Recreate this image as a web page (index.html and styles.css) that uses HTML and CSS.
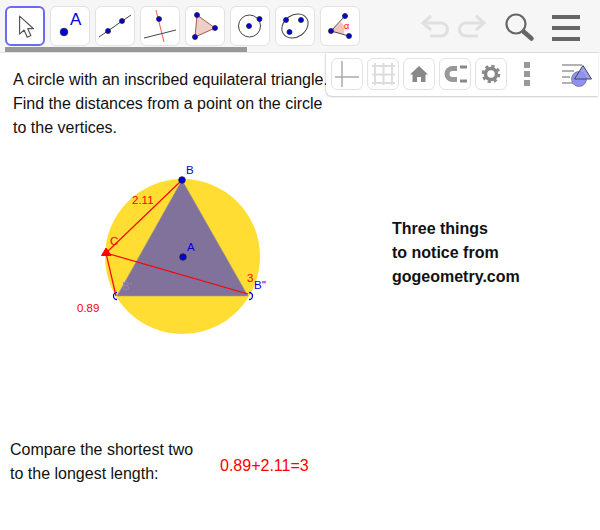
FILE: index.html
```html
<!DOCTYPE html>
<html lang="en">
<head>
<meta charset="utf-8">
<title>Three things to notice</title>
<link rel="stylesheet" href="styles.css">
</head>
<body>
<div class="app">
  <header class="toolbar">
    <div class="tools">
      <button class="tool active"><svg viewBox="0 0 40 40"><path d="M14 9V29l5-4.500 3.500 8 4-2-3.500-7.500h6.500z" fill="#fff" stroke="#555" stroke-width="1.300" stroke-linejoin="round"/></svg></button>
      <button class="tool"><svg viewBox="0 0 38 38"><circle cx="13" cy="25" r="3.800" fill="#0000e0" stroke="#223" stroke-width=".8"/><text x="19" y="18" class="icon-a">A</text></svg></button>
      <button class="tool"><svg viewBox="0 0 38 38"><path d="M3 30L35 8" class="ln"/><circle cx="12" cy="24" r="2.500" class="pt"/><circle cx="26" cy="14" r="2.500" class="pt"/></svg></button>
      <button class="tool"><svg viewBox="0 0 38 38"><path d="M15 3l8 32" class="ln red"/><path d="M3 31l32-8" class="ln"/><circle cx="18" cy="12" r="2.500" class="pt"/></svg></button>
      <button class="tool"><svg viewBox="0 0 38 38"><path d="M11 8L29 21 9 30z" fill="#eecfc8" stroke="#a8584c" stroke-width="1"/><circle cx="11" cy="8" r="2.500" class="pt"/><circle cx="29" cy="21" r="2.500" class="pt"/><circle cx="9" cy="30" r="2.500" class="pt"/></svg></button>
      <button class="tool"><svg viewBox="0 0 38 38"><circle cx="18.500" cy="19" r="11" class="ln"/><circle cx="18" cy="19" r="2.500" class="pt"/><circle cx="28.500" cy="12" r="2.500" class="pt"/></svg></button>
      <button class="tool"><svg viewBox="0 0 38 38"><ellipse cx="19" cy="19" rx="14" ry="11" transform="rotate(-35 19 19)" class="ln"/><circle cx="10" cy="13" r="2.500" class="pt"/><circle cx="25" cy="13" r="2.500" class="pt"/><circle cx="13.500" cy="25" r="2.500" class="pt"/></svg></button>
      <button class="tool"><svg viewBox="0 0 38 38"><path d="M10 24L20 15a10 10 0 0 1 2.500 12z" fill="#f4c4bc"/><path d="M24 9L10 24l18 5" class="ln"/><circle cx="24" cy="9" r="2.500" class="pt"/><circle cx="10" cy="24" r="2.500" class="pt"/><circle cx="28" cy="29" r="2.500" class="pt"/><text x="23" y="22" class="icon-alpha">α</text></svg></button>
    </div>
    <div class="actions">
      <svg class="act undo" viewBox="0 0 30 24"><path d="M3 9h18a6.500 6.500 0 0 1 0 13H10" class="undo-l"/><path d="M11 2L3 9l8 7" class="undo-l"/></svg>
      <svg class="act redo" viewBox="0 0 30 24"><path d="M27 9H9a6.500 6.500 0 0 0 0 13h12" class="undo-l"/><path d="M19 2l8 7-8 7" class="undo-l"/></svg>
      <svg class="act search" viewBox="0 0 30 30"><circle cx="11" cy="11" r="9.500" fill="none" stroke="#666" stroke-width="2.200"/><path d="M18.500 18.500L26.500 25.500" stroke="#666" stroke-width="4.500" stroke-linecap="round"/></svg>
      <div class="menu"><span></span><span></span><span></span></div>
    </div>
    <div class="scrollbar"></div>
  </header>

  <main class="canvas">
    <p class="note intro">A circle with an inscribed equilateral triangle.<br>Find the distances from a point on the circle<br>to the vertices.</p>

    <svg class="figure" viewBox="0 0 600 477">
      <circle cx="182.500" cy="203.500" r="77.500" fill="#ffdd33"/>
      <path d="M182 127L117 243H248z" fill="#80729a" stroke="#a89a88" stroke-width=".6"/>
      <path d="M117 239.500a3.500 3.500 0 0 0 0 7" class="hid"/>
      <path d="M249 239.500a3.500 3.500 0 0 1 0 7" class="hid"/>
      <path d="M107 199L182 127" class="seg thin"/>
      <path d="M106 200L248 241" class="seg"/>
      <path d="M106 200L116 243" class="seg"/>
      <path d="M101.500 202.500L106 195 111 202.500z" fill="#f00" stroke="#f00"/>
      <circle cx="182" cy="127" r="3.300" class="pt"/>
      <circle cx="183" cy="204" r="3.300" class="pt"/>
      <text x="186" y="121" class="lb blue">B</text>
      <text x="187" y="198" class="lb blue">A</text>
      <text x="254" y="236" class="lb blue">B''</text>
      <text x="122" y="237" class="lb faint">B'</text>
      <text x="110" y="192" class="lb red-t">C</text>
      <text x="132" y="151" class="lb red-t">2.11</text>
      <text x="247" y="229" class="lb red-t">3</text>
      <text x="77" y="259" class="lb red-t">0.89</text>
    </svg>

    <p class="note things">Three things<br>to notice from<br>gogeometry.com</p>
    <p class="note compare">Compare the shortest two<br>to the longest length:</p>
    <p class="note sum">0.89+2.11=3</p>
  </main>

  <aside class="style-bar">
    <button class="style-btn"><svg viewBox="0 0 30 30"><path d="M10 2v26M3 18h24" stroke="#aaa" stroke-width="1.500" fill="none"/></svg></button>
    <button class="style-btn"><svg viewBox="0 0 30 30"><path d="M7 4v22M15.500 4v22M24 4v22M4 7h23M4 15.500h23M4 24h23" stroke="#ddd" stroke-width="2" fill="none"/></svg></button>
    <button class="style-btn"><svg viewBox="0 0 30 30"><path d="M15 7L6 15.500h2.500V23H13v-5h4v5h4.500v-7.500H24z" fill="#888"/></svg></button>
    <button class="style-btn"><svg viewBox="0 0 30 30"><path d="M17 9.500h-4.500a5.500 5.500 0 0 0 0 11H17" fill="none" stroke="#999" stroke-width="5"/><path d="M20 8h7M20 22h7" stroke="#888" stroke-width="3"/></svg></button>
    <button class="style-btn"><svg viewBox="0 0 30 30"><circle cx="15" cy="15" r="5.500" fill="none" stroke="#888" stroke-width="3.500"/><circle cx="15" cy="15" r="8" fill="none" stroke="#888" stroke-width="2.500" stroke-dasharray="3.300 3"/></svg></button>
    <div class="dots"><span></span><span></span><span></span></div>
    <svg class="algebra" viewBox="0 0 32 28"><path d="M1 4h20M1 10h12M1 16h8M1 22h12" stroke="#999" stroke-width="1.500"/><circle cx="18" cy="18" r="7.500" fill="#8f90f5" stroke="#777" stroke-width=".8"/><path d="M22 4.500L30.500 18H13.500z" fill="#8f90f5" fill-opacity=".85" stroke="#445" stroke-width="1"/></svg>
  </aside>
</div>
</body>
</html>
```

FILE: styles.css
```css
* { box-sizing: border-box; }
html, body { margin: 0; height: 100%; background: #fff; }
body { font-family: "Liberation Sans", Arial, sans-serif; overflow: hidden; }
.app { position: relative; width: 600px; height: 530px; overflow: hidden; }

.toolbar { position: relative; display: flex; justify-content: space-between; height: 53px; padding: 6px 0 0 5px; background: #f6f6f6; border-bottom: 1px solid #e4e4e4; }
.tools { display: flex; gap: 5px; }
.tool { width: 40px; height: 40px; padding: 0; background: #fff; border: 1px solid #e2e2e2; border-radius: 6px; }
.tool svg { display: block; width: 38px; height: 38px; }
.tool.active { border: 2px solid #6a6af2; }
.tool.active svg { width: 36px; height: 36px; }
.ln { fill: none; stroke: #444; stroke-width: 1; }
.ln.red { stroke: #f55; }
.pt { fill: #0000e0; stroke: #223; stroke-width: .8; }
.icon-a { font-size: 17px; fill: #0000e0; }
.icon-alpha { font-size: 9px; fill: #f00; }

.actions { display: flex; align-items: flex-start; height: 40px; padding-right: 20px; }
.act { display: block; }
.undo { width: 30px; height: 24px; margin-top: 8px; }
.redo { width: 30px; height: 24px; margin: 8px 0 0 7px; }
.undo-l { fill: none; stroke: #e0e0e0; stroke-width: 3; }
.search { width: 30px; height: 30px; margin: 7px 0 0 18px; }
.menu { display: flex; flex-direction: column; gap: 7px; width: 28px; margin: 9px 0 0 17px; }
.menu span { height: 4px; background: #666; }
.scrollbar { position: absolute; left: 5px; top: 47px; width: 242px; height: 5px; background: #999; }

.canvas { position: relative; height: 477px; }
.figure { position: absolute; left: 0; top: 0; width: 600px; height: 477px; }
.hid { fill: none; stroke: #0000d0; stroke-width: 1.300; }
.seg { stroke: #f00; stroke-width: 1.200; fill: none; }
.seg.thin { stroke-width: 1.100; }
.lb { font-size: 11.500px; }
.blue { fill: #0000e0; }
.faint { fill: #9287ad; }
.red-t { fill: #f00; }

.note { position: absolute; margin: 0; font-size: 16px; line-height: 24px; color: #111; white-space: nowrap; }
.intro { left: 13px; top: 15px; }
.things { left: 392px; top: 164px; font-weight: bold; }
.compare { left: 10px; top: 385px; }
.sum { left: 220px; top: 401px; color: #f00; }

.style-bar { position: absolute; left: 326px; top: 53px; display: flex; gap: 4px; width: 272px; height: 43px; padding: 5px 0 0 5px; background: #fff; border-radius: 0 0 0 6px; box-shadow: 0 1px 2px rgba(0,0,0,.18), -1px 0 2px rgba(0,0,0,.1); }
.style-btn { width: 32px; height: 32px; padding: 0; background: #fff; border: 1px solid #e2e2e2; border-radius: 6px; }
.style-btn svg { display: block; width: 30px; height: 30px; }
.dots { display: flex; flex-direction: column; gap: 3px; margin: 4px 0 0 13px; }
.dots span { width: 6px; height: 6px; background: #999; }
.algebra { width: 32px; height: 28px; margin: 3px 0 0 27px; }
```
